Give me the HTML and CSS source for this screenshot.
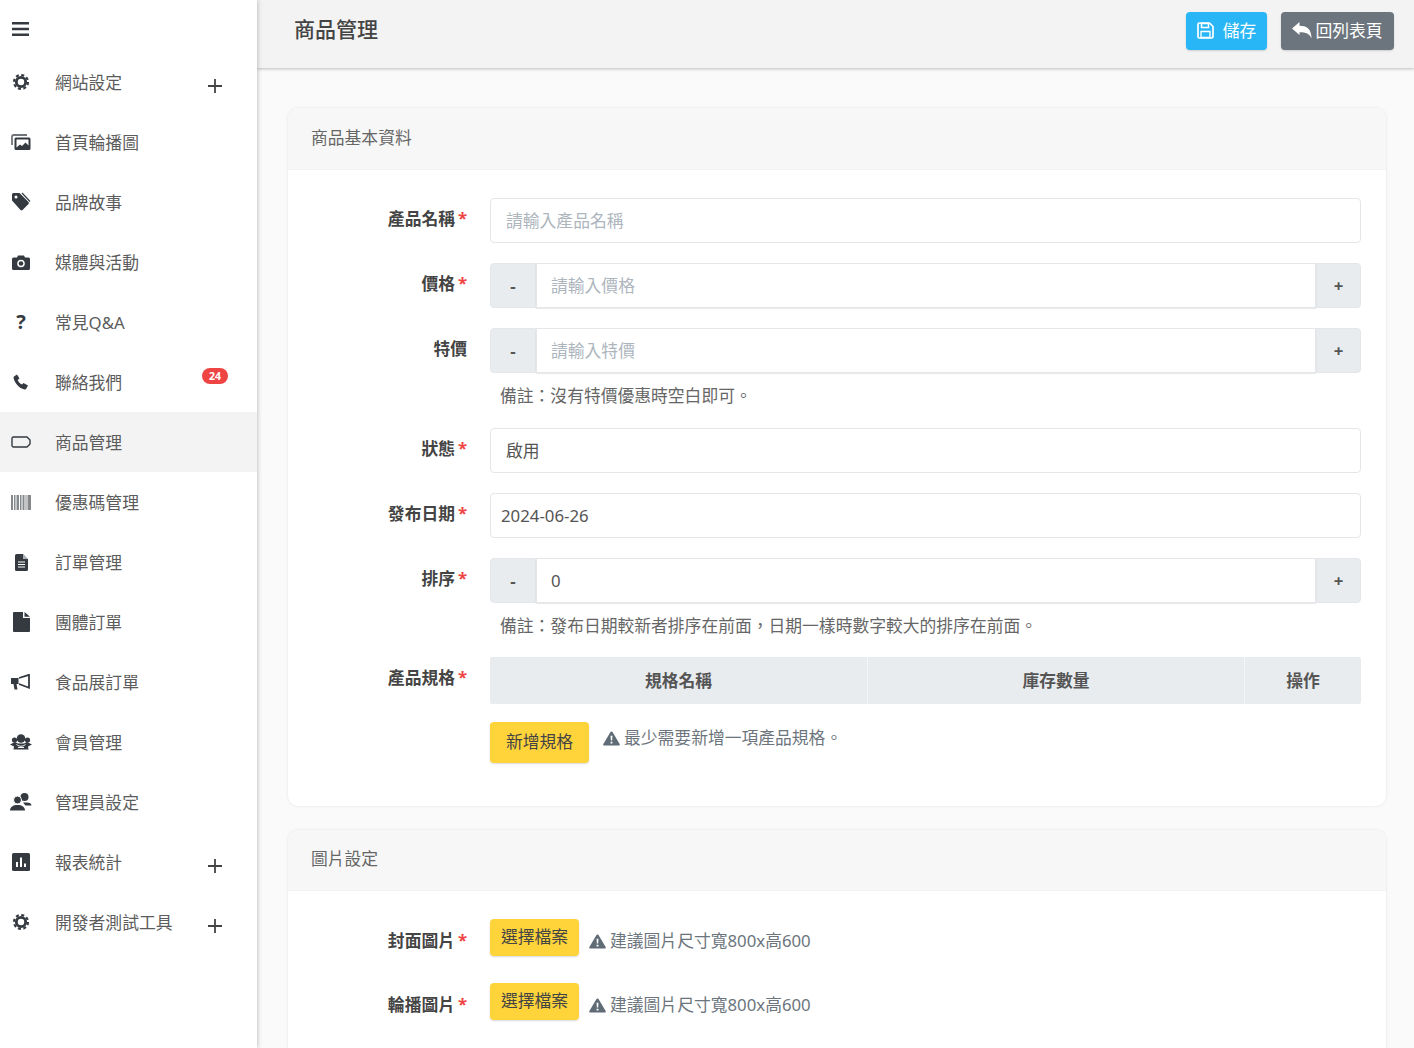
FILE: index.html
```html
<!DOCTYPE html>
<html lang="zh-TW">
<head>
    <meta charset="UTF-8">
    <meta name="viewport" content="width=device-width, initial-scale=1.0">
    <title>商品管理</title>
    <link rel="stylesheet" href="styles.css">
</head>
<body>
    <svg class="sprite" width="0" height="0">
        <symbol id="i-cog" viewBox="0 0 20 20">
            <circle cx="10" cy="10" r="5.200" fill="none" stroke="currentColor" stroke-width="3.200"/>
            <circle cx="10" cy="10" r="7.800" fill="none" stroke="currentColor" stroke-width="2.400" stroke-dasharray="3.400 2.730"/>
        </symbol>
        <symbol id="i-plus" viewBox="0 0 14 14">
            <path d="M7 0v14M0 7h14" stroke="currentColor" stroke-width="1.800"/>
        </symbol>
        <symbol id="i-warn" viewBox="0 0 18 16">
            <path d="M9 0.5c.5 0 .9.3 1.1.6l7.6 12.800c.4.8-.1 1.600-1 1.600H1.300c-.9 0-1.400-.8-1-1.600L7.900 1.100C8.100.8 8.500.5 9 .5z" fill="currentColor"/>
            <path d="M8 5h2l-.3 5.200H8.300zM8 11.400h2v2H8z" fill="#fff"/>
        </symbol>
    </svg>

    <aside class="sidebar">
        <div class="sidebar-top">
            <svg class="icon-bars" viewBox="0 0 17 14"><path d="M0 1.300h17M0 7h17M0 12.700h17" stroke="currentColor" stroke-width="2.600"/></svg>
        </div>
        <nav class="nav">
            <a class="nav-item">
                <span class="nav-icon"><svg width="18" height="18"><use href="#i-cog"/></svg></span>
                <span class="nav-text">網站設定</span>
                <svg class="nav-plus"><use href="#i-plus"/></svg>
            </a>
            <a class="nav-item">
                <span class="nav-icon"><svg width="20" height="16" viewBox="0 0 20 16"><path d="M1 11V2.500A1.500 1.500 0 0 1 2.500 1H16" fill="none" stroke="currentColor" stroke-width="1.800" opacity=".7"/><path d="M5 3.500h13a1.500 1.500 0 0 1 1.500 1.500v9.500A1.500 1.500 0 0 1 18 16H5a1.500 1.500 0 0 1-1.500-1.500V5A1.500 1.500 0 0 1 5 3.500z" fill="currentColor"/><path d="M5.500 5.500h12v6l-3-3-3.500 3.500-2-1.500-3.500 3z" fill="#fff"/></svg></span>
                <span class="nav-text">首頁輪播圖</span>
            </a>
            <a class="nav-item">
                <span class="nav-icon"><svg width="20" height="20" viewBox="0 0 20 20"><path d="M1 8.500V2.500A1.500 1.500 0 0 1 2.500 1h6l9 9a1.500 1.500 0 0 1 0 2l-6 6a1.500 1.500 0 0 1-2 0z" fill="currentColor"/><circle cx="5" cy="5" r="1.500" fill="#fff"/><path d="M11 1l8 8.500" stroke="currentColor" stroke-width="1.200" fill="none"/></svg></span>
                <span class="nav-text">品牌故事</span>
            </a>
            <a class="nav-item">
                <span class="nav-icon"><svg width="18" height="15" viewBox="0 0 18 15"><path d="M1.500 2.500H5L6 .5h6l1 2h3.500A1.500 1.500 0 0 1 18 4v9.500a1.500 1.500 0 0 1-1.500 1.500h-15A1.500 1.500 0 0 1 0 13.500V4a1.500 1.500 0 0 1 1.500-1.500z" fill="currentColor"/><circle cx="9" cy="8.500" r="3.800" fill="#fff"/><circle cx="9" cy="8.500" r="2.300" fill="currentColor"/></svg></span>
                <span class="nav-text">媒體與活動</span>
            </a>
            <a class="nav-item">
                <span class="nav-icon nav-q">?</span>
                <span class="nav-text">常見Q&amp;A</span>
            </a>
            <a class="nav-item">
                <span class="nav-icon"><svg width="16" height="16" viewBox="0 0 16 16"><path d="M1 2.500L4 .5l2.500 4-1.800 1.500c.8 2 2.300 3.500 4.300 4.500L10.500 9 15 11.500l-1.800 3.300c-.4.700-1 .9-1.700.7C6 14 2 9.500.6 4.200.4 3.500.5 2.900 1 2.500z" fill="currentColor"/></svg></span>
                <span class="nav-text">聯絡我們</span>
                <span class="nav-badge">24</span>
            </a>
            <a class="nav-item active">
                <span class="nav-icon"><svg width="20" height="12" viewBox="0 0 20 12"><path d="M2.500 1H16l3 3v4l-3 3H2.500A1.500 1.500 0 0 1 1 9.500v-7A1.500 1.500 0 0 1 2.500 1z" fill="none" stroke="currentColor" stroke-width="1.400"/></svg></span>
                <span class="nav-text">商品管理</span>
            </a>
            <a class="nav-item">
                <span class="nav-icon"><svg width="20" height="15" viewBox="0 0 20 15"><path d="M0 0h2v15H0zM3 0h1.500v15H3zM5.500 0h2.500v15H5.500zM9 0h1.500v15H9zM11.500 0h2v15h-2zM14.500 0h1v15h-1zM16.500 0h3.500v15h-3.500z" fill="currentColor" opacity=".6"/></svg></span>
                <span class="nav-text">優惠碼管理</span>
            </a>
            <a class="nav-item">
                <span class="nav-icon"><svg width="13" height="17" viewBox="0 0 13 17"><path d="M1.500 0H8l5 5v10.500a1.500 1.500 0 0 1-1.500 1.500h-10A1.500 1.500 0 0 1 0 15.500v-14A1.500 1.500 0 0 1 1.500 0z" fill="currentColor"/><path d="M3 8h7M3 10.500h7M3 13h7" stroke="#fff" stroke-width="1"/><path d="M8 0l5 5H8z" fill="#fff" opacity=".6"/></svg></span>
                <span class="nav-text">訂單管理</span>
            </a>
            <a class="nav-item">
                <span class="nav-icon"><svg width="17" height="20" viewBox="0 0 17 20"><path d="M1 0h9v6h7v13a1 1 0 0 1-1 1H1a1 1 0 0 1-1-1V1a1 1 0 0 1 1-1z" fill="currentColor"/><path d="M11.500 0L17 4.800h-5.500z" fill="currentColor"/></svg></span>
                <span class="nav-text">團體訂單</span>
            </a>
            <a class="nav-item">
                <span class="nav-icon"><svg width="20" height="16" viewBox="0 0 20 16"><path d="M0 4h7.500v6H5.500l1 5.500H3.500L2.500 10H0z" fill="currentColor"/><path d="M8 4l10-3.200v13L8 10" fill="none" stroke="currentColor" stroke-width="1.800"/></svg></span>
                <span class="nav-text">食品展訂單</span>
            </a>
            <a class="nav-item">
                <span class="nav-icon"><svg width="22" height="16" viewBox="0 0 22 16"><circle cx="11" cy="4.500" r="4.300" fill="currentColor"/><circle cx="4.500" cy="6" r="2.600" fill="currentColor"/><circle cx="17.500" cy="6" r="2.600" fill="currentColor"/><path d="M0 10.500l5-2.500 3 1.500h6l3-1.500 5 2.500-4 2 .5 3H3.500l.5-3z" fill="currentColor"/><path d="M6.500 10.500c3 2.300 6 2.300 9 0M8 13.500h6" stroke="#fff" stroke-width="1" fill="none"/></svg></span>
                <span class="nav-text">會員管理</span>
            </a>
            <a class="nav-item">
                <span class="nav-icon"><svg width="22" height="18" viewBox="0 0 22 18"><circle cx="14.500" cy="4" r="4" fill="currentColor"/><path d="M13 9.500h4c2.500 0 4.500 1 4.500 3h-6z" fill="currentColor"/><circle cx="7.500" cy="7" r="4" fill="currentColor" stroke="#fff"/><path d="M0 17.500c0-3.500 3-5.500 7.500-5.500s7.500 2 7.500 5.500z" fill="currentColor"/></svg></span>
                <span class="nav-text">管理員設定</span>
            </a>
            <a class="nav-item">
                <span class="nav-icon"><svg width="18" height="18" viewBox="0 0 18 18"><rect width="18" height="18" rx="1.500" fill="currentColor"/><path d="M4 9h2v5H4zM8 4.500h2V14H8zM12 10.500h2V14h-2z" fill="#fff"/></svg></span>
                <span class="nav-text">報表統計</span>
                <svg class="nav-plus"><use href="#i-plus"/></svg>
            </a>
            <a class="nav-item">
                <span class="nav-icon"><svg width="18" height="18"><use href="#i-cog"/></svg></span>
                <span class="nav-text">開發者測試工具</span>
                <svg class="nav-plus"><use href="#i-plus"/></svg>
            </a>
        </nav>
    </aside>

    <div class="main">
        <header class="topbar">
            <h1>商品管理</h1>
            <div class="topbar-actions">
                <button class="btn btn-save">
                    <svg width="17" height="17" viewBox="0 0 17 17"><path d="M2.500 1h10L16 4.500v10a1.500 1.500 0 0 1-1.500 1.500h-12A1.500 1.500 0 0 1 1 14.500v-12A1.500 1.500 0 0 1 2.500 1z" fill="none" stroke="currentColor" stroke-width="1.700"/><path d="M4.500 1.500h7v4h-7z" fill="none" stroke="currentColor" stroke-width="1.500"/><path d="M4 9.500h9v6H4z" fill="none" stroke="currentColor" stroke-width="1.300"/></svg>
                    儲存
                </button>
                <button class="btn btn-back">
                    <svg width="20" height="17" viewBox="0 0 20 17"><path d="M0 6.500L7.500 0v3.800c6.500 0 12 2.500 12 12.700-1.800-4.800-5.500-6.300-12-6.300V13z" fill="currentColor"/></svg>
                    回列表頁
                </button>
            </div>
        </header>

        <div class="content">
            <section class="card">
                <div class="card-header">商品基本資料</div>
                <div class="card-body">
                    <div class="form-row">
                        <label class="form-label required">產品名稱</label>
                        <div class="form-input placeholder">請輸入產品名稱</div>
                    </div>
                    <div class="form-row">
                        <label class="form-label required">價格</label>
                        <div class="input-group">
                            <button class="step step-minus">-</button>
                            <div class="form-input placeholder">請輸入價格</div>
                            <button class="step step-plus">+</button>
                        </div>
                    </div>
                    <div class="form-row">
                        <label class="form-label">特價</label>
                        <div>
                            <div class="input-group">
                                <button class="step step-minus">-</button>
                                <div class="form-input placeholder">請輸入特價</div>
                                <button class="step step-plus">+</button>
                            </div>
                            <div class="form-note">備註：沒有特價優惠時空白即可。</div>
                        </div>
                    </div>
                    <div class="form-row">
                        <label class="form-label required">狀態</label>
                        <div class="form-input">啟用</div>
                    </div>
                    <div class="form-row">
                        <label class="form-label required">發布日期</label>
                        <div class="form-input form-date">2024-06-26</div>
                    </div>
                    <div class="form-row">
                        <label class="form-label required">排序</label>
                        <div>
                            <div class="input-group">
                                <button class="step step-minus">-</button>
                                <div class="form-input">0</div>
                                <button class="step step-plus">+</button>
                            </div>
                            <div class="form-note form-note-tight">備註：發布日期較新者排序在前面，日期一樣時數字較大的排序在前面。</div>
                        </div>
                    </div>
                    <div class="form-row">
                        <label class="form-label required">產品規格</label>
                        <div>
                            <div class="spec-head">
                                <div>規格名稱</div>
                                <div>庫存數量</div>
                                <div>操作</div>
                            </div>
                            <div class="spec-foot">
                                <button class="btn btn-yellow btn-add">新增規格</button>
                                <span class="hint"><svg class="hint-icon"><use href="#i-warn"/></svg>最少需要新增一項產品規格。</span>
                            </div>
                        </div>
                    </div>
                </div>
            </section>

            <section class="card">
                <div class="card-header card-header-sm">圖片設定</div>
                <div class="card-body">
                    <div class="form-row file-row">
                        <label class="form-label required">封面圖片</label>
                        <div class="file-field">
                            <button class="btn btn-yellow btn-file">選擇檔案</button>
                            <span class="hint"><svg class="hint-icon"><use href="#i-warn"/></svg>建議圖片尺寸寬800x高600</span>
                        </div>
                    </div>
                    <div class="form-row file-row">
                        <label class="form-label required">輪播圖片</label>
                        <div class="file-field">
                            <button class="btn btn-yellow btn-file">選擇檔案</button>
                            <span class="hint"><svg class="hint-icon"><use href="#i-warn"/></svg>建議圖片尺寸寬800x高600</span>
                        </div>
                    </div>
                </div>
            </section>
        </div>
    </div>
</body>
</html>
```

FILE: styles.css
```css
* {
    margin: 0;
    padding: 0;
    box-sizing: border-box;
    font-family: "Noto Sans", "Noto Sans CJK TC", sans-serif;
}

body {
    display: flex;
    height: 100vh;
    overflow: hidden;
    background: #fafafa;
    color: #555;
    font-size: 16.8px;
    line-height: 1.5;
}

button {
    border: none;
    font-size: 16.8px;
    color: inherit;
}

.sprite {
    position: absolute;
}

/* sidebar */
.sidebar {
    flex: 0 0 257px;
    background: #fff;
    box-shadow: 0 0 5px rgba(0, 0, 0, 0.3);
    z-index: 2;
}

.sidebar-top {
    height: 52px;
    padding: 22px 0 0 12px;
    color: #343a40;
}

.icon-bars {
    display: block;
    width: 17px;
    height: 14px;
}

.nav-item {
    display: flex;
    align-items: center;
    height: 60px;
    color: #343a40;
    position: relative;
}

.nav-item.active {
    background: #f3f3f3;
}

.nav-icon {
    flex: 0 0 42px;
    display: flex;
    justify-content: center;
    align-items: center;
}

.nav-q {
    font-size: 20px;
    font-weight: 700;
}

.nav-text {
    margin-left: 13px;
    color: #5c5c5c;
    margin-top: 1px;
}

.nav-plus {
    position: absolute;
    left: 208px;
    top: 27px;
    width: 14px;
    height: 14px;
    color: #444;
}

.nav-badge {
    position: absolute;
    left: 202px;
    top: 16px;
    width: 26px;
    height: 16px;
    border-radius: 8px;
    background: #ef4444;
    color: #fff;
    font-size: 10.5px;
    font-weight: 700;
    line-height: 16px;
    text-align: center;
}

/* top bar */
.main {
    flex: 1;
    min-width: 0;
}

.topbar {
    display: flex;
    justify-content: space-between;
    align-items: center;
    height: 68px;
    padding: 0 20px 6px 37px;
    background: #f3f3f3;
    box-shadow: 0 1px 3px rgba(0, 0, 0, 0.25);
}

.topbar h1 {
    font-size: 21px;
    font-weight: 500;
    color: #444;
    margin-top: -2px;
}

.topbar-actions {
    display: flex;
    gap: 14px;
}

.btn {
    display: flex;
    align-items: center;
    justify-content: center;
    border-radius: 4px;
    box-shadow: 0 1px 2px rgba(0, 0, 0, 0.15);
}

.btn-save {
    width: 81px;
    height: 38px;
    gap: 9px;
    padding-bottom: 2px;
    background: #29b6f6;
    color: #fff;
}

.btn-back {
    width: 113px;
    height: 38px;
    gap: 3px;
    padding-bottom: 2px;
    background: #6c757d;
    color: #fff;
}

.btn-yellow {
    background: #ffd43b;
    color: #444;
}

/* cards */
.content {
    padding: 40px 28px 0 31px;
}

.card {
    background: #fff;
    border-radius: 10px;
    box-shadow: 0 0 3px rgba(0, 0, 0, 0.1);
    margin-bottom: 24px;
    overflow: hidden;
}

.card-header {
    height: 62px;
    padding: 17px 23px 0;
    background: #f7f7f7;
    border-bottom: 1px solid #f2f2f2;
    color: #666;
}

.card-header-sm {
    height: 61px;
    padding-top: 16px;
}

.card-body {
    padding: 28px 25px 23px 0;
}

.form-row {
    display: grid;
    grid-template-columns: 179px 1fr;
    column-gap: 23px;
    margin-bottom: 20px;
}

.form-label {
    font-weight: 700;
    color: #444;
    text-align: right;
    line-height: 41px;
}

.required {
    position: relative;
    padding-right: 12px;
}

.required::after {
    content: "*";
    position: absolute;
    right: 0;
    top: -1px;
    color: #ef4444;
}

.form-input {
    flex: 1;
    height: 45px;
    padding: 0 15px;
    line-height: 43px;
    background: #fff;
    border: 1px solid #e4e6ea;
    border-radius: 4px;
    color: #555;
}

.form-date {
    padding: 0 10px;
}

.placeholder {
    color: #adb5bd;
    line-height: 44px;
}

.input-group {
    display: flex;
}

.input-group .form-input {
    padding: 0 14px;
    border-radius: 0;
    box-shadow: 0 1px 1px rgba(0, 0, 0, 0.08);
}

.step {
    flex: 0 0 46px;
    height: 45px;
    background: #e9ecef;
    border: 1px solid #e4e6ea;
    font-weight: 700;
    color: #555;
}

.step-minus {
    border-radius: 4px 0 0 4px;
}

.step-plus {
    flex-basis: 45px;
    border-radius: 0 4px 4px 0;
}

.form-note {
    margin: 10px 0 0 10px;
    height: 25px;
    color: #666;
    line-height: 25px;
}

.form-note-tight {
    margin-bottom: -1px;
}

.spec-head {
    display: grid;
    grid-template-columns: 377px 377px 117px;
    height: 47px;
    background: #e9ecef;
    border-radius: 2px;
    line-height: 47px;
    text-align: center;
    font-weight: 700;
    color: #555;
}

.spec-head div + div {
    border-left: 1px solid #f4f5f6;
}

.spec-foot {
    display: flex;
    align-items: flex-start;
    gap: 14px;
    margin-top: 18px;
}

.btn-add {
    width: 99px;
    height: 41px;
    padding-bottom: 3px;
}

.spec-foot .hint {
    margin-top: 1px;
}

.hint {
    display: inline-flex;
    align-items: center;
    color: #6c757d;
    line-height: 30px;
}

.hint-icon {
    width: 17px;
    height: 15px;
    margin-right: 4px;
    color: #5f6b76;
}

.file-row {
    margin-bottom: 27px;
}

.file-row + .file-row {
    margin-top: -7px;
}

.file-field {
    display: flex;
    align-items: flex-start;
    gap: 10px;
}

.btn-file {
    width: 89px;
    height: 37px;
    padding-bottom: 3px;
}

.file-field .hint {
    margin-top: 7px;
}

.file-row .form-label {
    line-height: 44px;
}
```
